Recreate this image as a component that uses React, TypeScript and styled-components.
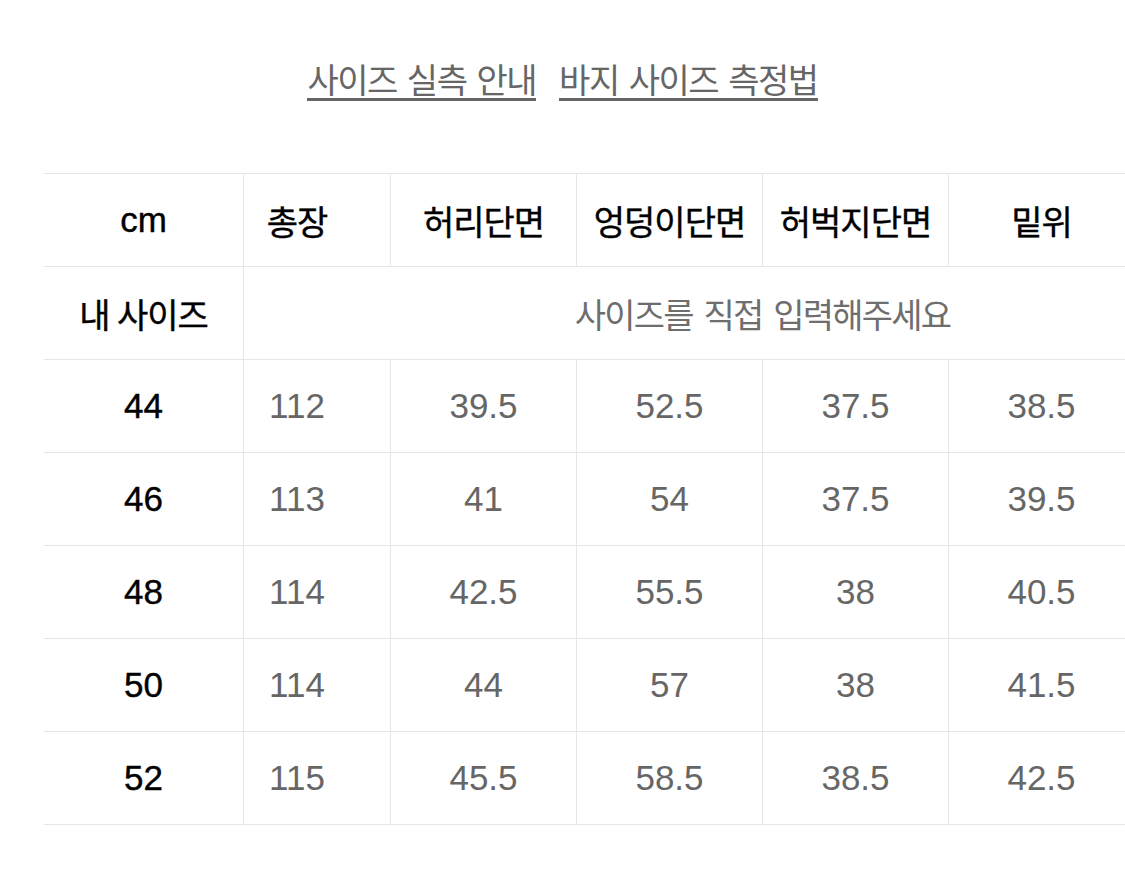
import React from "react";
import styled, { createGlobalStyle } from "styled-components";

const Global = createGlobalStyle`
  html, body { margin: 0; padding: 0; background: #fff; overflow: hidden; }
  body { font-family: "Liberation Sans", "Noto Sans CJK KR", Arial, sans-serif; }
`;

const Page = styled.div`
  width: 1125px;
  overflow: hidden;
  background: #fff;
`;

const LinkBar = styled.div`
  display: flex;
  justify-content: center;
  gap: 23px;
  padding-top: 60px;
`;

const GuideLink = styled.a`
  display: inline-block;
  font-family: "Noto Sans CJK KR", sans-serif;
  font-size: 34px;
  letter-spacing: -1.5px;
  word-spacing: 4px;
  line-height: 38px;
  color: #666;
  text-decoration: none;
  border-bottom: 3px solid #666;
  cursor: pointer;
`;

const Table = styled.div`
  margin-top: 72px;
  margin-left: 44px;
  width: 1090px;
  display: grid;
  grid-template-columns: 199px 147px 186px 186px 186px 186px;
  border-top: 1px solid #e6e6e6;
`;

const Cell = styled.div<{ $first?: boolean; $span?: number; $padR?: number; $padL?: number }>`
  box-sizing: border-box;
  height: 93px;
  display: flex;
  align-items: center;
  justify-content: center;
  border-bottom: 1px solid #e6e6e6;
  border-left: ${(p) => (p.$first ? "none" : "1px solid #e6e6e6")};
  grid-column: span ${(p) => p.$span ?? 1};
  padding-right: ${(p) => p.$padR ?? 0}px;
  padding-left: ${(p) => p.$padL ?? 0}px;
  white-space: nowrap;
`;

const HeadText = styled.span<{ $latin?: boolean }>`
  color: #000;
  font-family: ${(p) => (p.$latin ? `"Liberation Sans", Arial, sans-serif` : `"Noto Sans CJK KR", sans-serif`)};
  font-size: ${(p) => (p.$latin ? "35px" : "34px")};
  letter-spacing: ${(p) => (p.$latin ? "0" : "-1px")};
  font-weight: 400;
  -webkit-text-stroke: 0.4px #000;
`;

const LabelKo = styled.span`
  color: #000;
  font-family: "Noto Sans CJK KR", sans-serif;
  font-size: 34px;
  letter-spacing: -1px;
  word-spacing: 1px;
  -webkit-text-stroke: 0.4px #000;
`;

const Placeholder = styled.span`
  color: #6e6e6e;
  font-family: "Noto Sans CJK KR", sans-serif;
  font-size: 34px;
  letter-spacing: -1.8px;
  word-spacing: 5px;
`;

const Num = styled.span<{ $dark?: boolean }>`
  color: ${(p) => (p.$dark ? "#000" : "#666")};
  font-family: "Liberation Sans", Arial, sans-serif;
  font-size: 35px;
  -webkit-text-stroke: ${(p) => (p.$dark ? "0.4px #000" : "0")};
`;

const headers = ["총장", "허리단면", "엉덩이단면", "허벅지단면", "밑위"];

const rows: [string, string[]][] = [
  ["44", ["112", "39.5", "52.5", "37.5", "38.5"]],
  ["46", ["113", "41", "54", "37.5", "39.5"]],
  ["48", ["114", "42.5", "55.5", "38", "40.5"]],
  ["50", ["114", "44", "57", "38", "41.5"]],
  ["52", ["115", "45.5", "58.5", "38.5", "42.5"]],
];

export default function App() {
  return (
    <Page>
      <Global />
      <LinkBar>
        <GuideLink>사이즈 실측 안내</GuideLink>
        <GuideLink>바지 사이즈 측정법</GuideLink>
      </LinkBar>
      <Table>
        <Cell $first>
          <HeadText $latin>cm</HeadText>
        </Cell>
        {headers.map((h, i) => (
          <Cell key={h} $padR={i === 0 ? 40 : 0}>
            <HeadText>{h}</HeadText>
          </Cell>
        ))}

        <Cell $first>
          <LabelKo>내 사이즈</LabelKo>
        </Cell>
        <Cell $span={5} $padL={147}>
          <Placeholder>사이즈를 직접 입력해주세요</Placeholder>
        </Cell>

        {rows.map(([size, vals]) => (
          <React.Fragment key={size}>
            <Cell $first>
              <Num $dark>{size}</Num>
            </Cell>
            {vals.map((v, i) => (
              <Cell key={i} $padR={i === 0 ? 40 : 0}>
                <Num>{v}</Num>
              </Cell>
            ))}
          </React.Fragment>
        ))}
      </Table>
    </Page>
  );
}
